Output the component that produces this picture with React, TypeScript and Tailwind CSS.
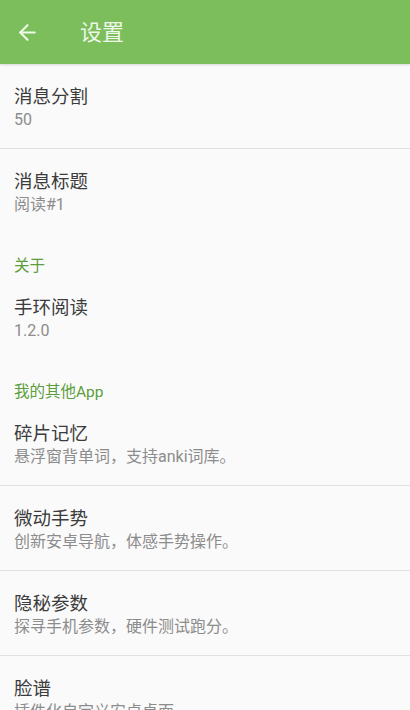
import { ArrowLeft } from "lucide-react";

interface PrefItem {
  title: string;
  summary: string;
  divider?: boolean;
}

interface PrefGroup {
  category?: string;
  items: PrefItem[];
}

const groups: PrefGroup[] = [
  {
    items: [
      { title: "消息分割", summary: "50", divider: true },
      { title: "消息标题", summary: "阅读#1" },
    ],
  },
  {
    category: "关于",
    items: [{ title: "手环阅读", summary: "1.2.0" }],
  },
  {
    category: "我的其他App",
    items: [
      { title: "碎片记忆", summary: "悬浮窗背单词，支持anki词库。", divider: true },
      { title: "微动手势", summary: "创新安卓导航，体感手势操作。", divider: true },
      { title: "隐秘参数", summary: "探寻手机参数，硬件测试跑分。", divider: true },
      { title: "脸谱", summary: "插件化自定义安卓桌面。" },
    ],
  },
];

const PrefRow = ({ item }: { item: PrefItem }) => (
  <div
    className={
      "h-[85px] px-[14px] pt-[20px] flex flex-col " +
      (item.divider ? "border-b border-[#e0e0e0]" : "")
    }
  >
    <div className="text-[18.5px] leading-[26px] text-[#3c3c3c]">{item.title}</div>
    <div className="text-[16px] leading-[20px] text-[#8c8c8c]">{item.summary}</div>
  </div>
);

export default function App() {
  return (
    <div
      className="w-[410px] h-[710px] overflow-hidden bg-[#fafafa] flex flex-col"
      style={{ fontFamily: 'Roboto, "Noto Sans CJK SC", sans-serif' }}
    >
      <div className="h-[64px] shrink-0 bg-[#7cbe5b] flex items-center shadow-[0_1px_2px_rgba(0,0,0,0.15)] relative z-10">
        <ArrowLeft className="ml-[15px] w-[25px] h-[25px] text-[#eef8e8]" strokeWidth={2} />
        <span className="ml-[40px] text-[22px] text-[#eef8e8]">设置</span>
      </div>
      <div className="flex flex-col">
        {groups.map((g, gi) => (
          <div key={gi}>
            {g.category && (
              <div className="h-[41px] px-[14px] pt-[22px] text-[15.5px] leading-[20px] text-[#5b9e3b]">
                {g.category}
              </div>
            )}
            {g.items.map((item) => (
              <PrefRow key={item.title} item={item} />
            ))}
          </div>
        ))}
      </div>
    </div>
  );
}
